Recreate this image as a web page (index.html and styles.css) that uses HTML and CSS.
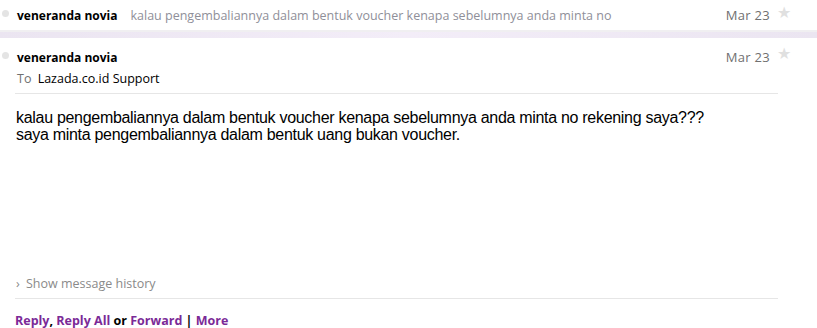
FILE: index.html
```html
<!DOCTYPE html>
<html>
<head>
<meta charset="utf-8">
<link rel="stylesheet" href="styles.css">
</head>
<body>
<div class="row collapsed">
  <span class="dot"></span>
  <span class="name">veneranda novia</span>
  <span class="preview">kalau pengembaliannya dalam bentuk voucher kenapa sebelumnya anda minta no rekening saya???</span>
  <span class="date">Mar 23</span>
  <span class="star">★</span>
</div>
<div class="band"></div>
<div class="message">
  <div class="row head">
    <span class="dot"></span>
    <span class="name">veneranda novia</span>
    <span class="date">Mar 23</span>
    <span class="star">★</span>
  </div>
  <div class="to"><span class="to-label">To</span> Lazada.co.id Support</div>
  <div class="body">
    <p>kalau pengembaliannya dalam bentuk voucher kenapa sebelumnya anda minta no rekening saya???</p>
    <p>saya minta pengembaliannya dalam bentuk uang bukan voucher.</p>
  </div>
  <div class="history"><span class="chev">›</span> Show message history</div>
  <div class="actions"><a>Reply</a>, <a>Reply All</a> <span class="plain">or</span> <a>Forward</a> <span class="plain">|</span> <a>More</a></div>
</div>
</body>
</html>
```

FILE: styles.css
```css
html, body {
  margin: 0;
  padding: 0;
  background: #ffffff;
}
body {
  width: 817px;
  height: 328px;
  overflow: hidden;
  font-family: "Open Sans", "Noto Sans", sans-serif;
  font-size: 12.5px;
  color: #000;
}
.row {
  display: flex;
  align-items: center;
  white-space: nowrap;
  padding-left: 2px;
}
.collapsed {
  height: 30px;
}
.dot {
  width: 7px;
  height: 7px;
  border-radius: 50%;
  background: #e4e4e4;
  flex: none;
  margin-right: 8px;
  position: relative;
  top: -2px;
}
.name {
  font-weight: 700;
  font-size: 12px;
  flex: none;
}
.preview {
  color: #8f8f99;
  margin-left: 13px;
  width: 483px;
  overflow: hidden;
  flex: none;
}
.date {
  color: #707070;
  margin-left: auto;
  font-size: 13px;
  letter-spacing: 0.3px;
  flex: none;
}
.star {
  color: #e0e0e0;
  font-family: "DejaVu Sans", sans-serif;
  font-size: 16px;
  line-height: 16px;
  margin-left: 7px;
  width: 40px;
  flex: none;
  position: relative;
  top: -2px;
}
.band {
  height: 8px;
  border-top: 2px solid #f0eff1;
  box-sizing: border-box;
  background: linear-gradient(90deg, #ebe5f1 0%, #f3edf8 50%, #ebe5f1 100%);
}
.head {
  height: 24px;
  margin-top: 7px;
}
.head .star {
  top: -3px;
}
.to,
.body,
.history,
.actions {
  margin-left: 15px;
  margin-right: 39px;
}
.to {
  padding-left: 2px;
  height: 24px;
  line-height: 20px;
  border-bottom: 1px solid #e6e6e6;
}
.to-label {
  color: #707070;
  margin-right: 3px;
}
.body {
  font-family: "Liberation Sans", Arial, sans-serif;
  font-size: 16px;
  line-height: 17px;
  letter-spacing: -0.3px;
  padding: 15px 0 0 1px;
  height: 180px;
  box-sizing: border-box;
}
.body p {
  margin: 0;
}
.history {
  color: #8a8a8a;
  padding-left: 1px;
  height: 20px;
  line-height: 20px;
  padding-bottom: 4px;
  border-bottom: 1px solid #e6e6e6;
}
.chev {
  color: #888;
  margin-right: 3px;
}
.actions {
  margin-top: 15px;
  font-weight: 700;
  font-size: 12.5px;
  line-height: 14px;
}
.actions a {
  color: #7b2a97;
}
.actions .plain {
  color: #000;
}
```
